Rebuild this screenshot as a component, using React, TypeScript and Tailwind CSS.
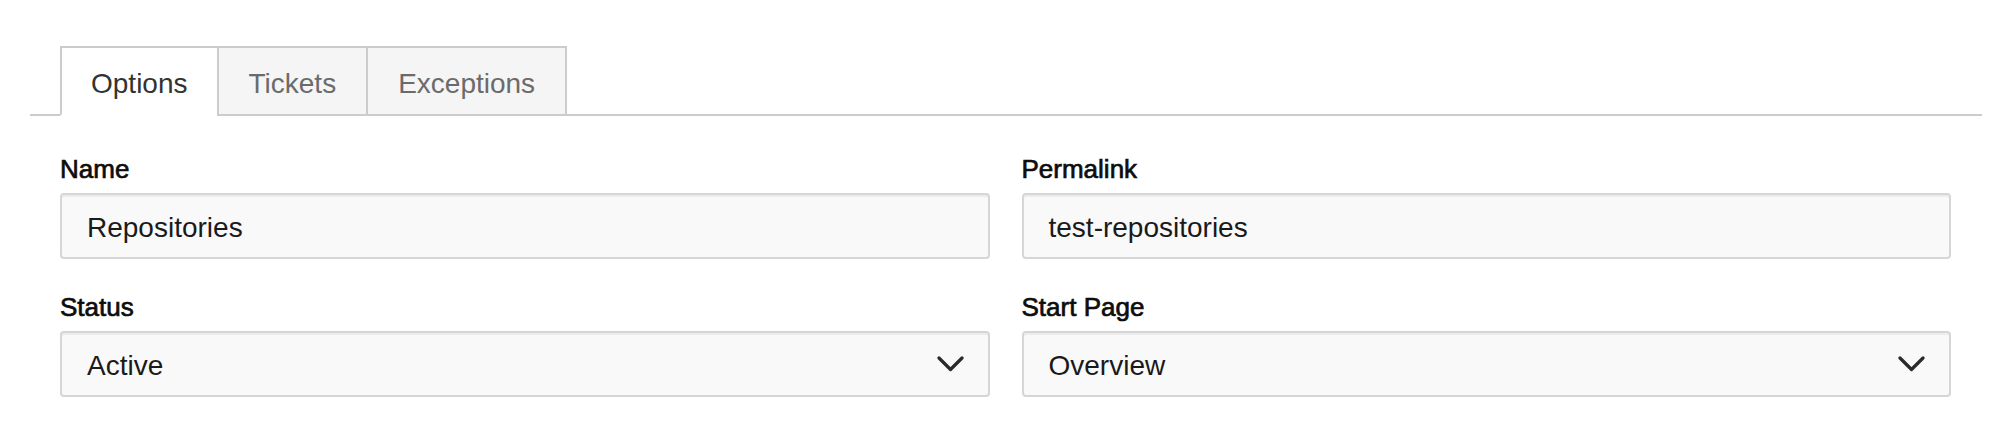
const TABS = ['Options', 'Tickets', 'Exceptions'];

function Chevron() {
  return (
    <svg width="27" height="16" viewBox="0 0 27 16" fill="none" className="mt-[-3px] text-[#2a2a2a]">
      <polyline points="2,2 13.5,13.5 25,2" stroke="currentColor" strokeWidth="3.2" strokeLinecap="round" strokeLinejoin="round" />
    </svg>
  );
}

function Field({ label, value, select }: { label: string; value: string; select?: boolean }) {
  return (
    <div className="flex flex-col">
      <label className="mb-[8px] pt-[2px] text-[26px] leading-[31px] font-normal text-[#0d0d0d] [-webkit-text-stroke:0.7px_#0d0d0d]">
        {label}
      </label>
      <div className="flex h-[66px] items-center justify-between rounded-[4px] border-2 border-[#d6d6d6] bg-[#f9f9f9] pl-[25px] pr-[24px] pt-[3px] shadow-[inset_0_2px_0_#ececec]">
        <span className="text-[28px] text-[#1a1a1a]">{value}</span>
        {select && <Chevron />}
      </div>
    </div>
  );
}

export default function App() {
  return (
    <main
      className="h-[430px] w-[2012px] bg-white"
      style={{ fontFamily: '"Liberation Sans", Arial, sans-serif' }}
    >
      {/* タブ */}
      <div className="mx-[30px] flex border-b-2 border-[#ccc] pl-[30px] pt-[46px]">
        {TABS.map((tab, index) => {
          const active = index === 0;
          return (
            <div
              key={tab}
              className={
                active
                  ? '-mb-[2px] flex h-[70px] items-center border-2 border-[#ccc] border-b-white bg-white px-[29px] pt-[5px] text-[28px] text-[#333]'
                  : '-mb-[2px] -ml-[2px] flex h-[70px] items-center border-2 border-[#ccc] bg-[#f5f5f5] px-[30px] pt-[5px] text-[28px] text-[#6b6b6b]'
              }
            >
              {tab}
            </div>
          );
        })}
      </div>

      {/* フォーム */}
      <div className="grid grid-cols-2 gap-x-[32px] gap-y-[31px] pl-[60px] pr-[61px] pt-[36px]">
        <Field label="Name" value="Repositories" />
        <Field label="Permalink" value="test-repositories" />
        <Field label="Status" value="Active" select />
        <Field label="Start Page" value="Overview" select />
      </div>
    </main>
  );
}
